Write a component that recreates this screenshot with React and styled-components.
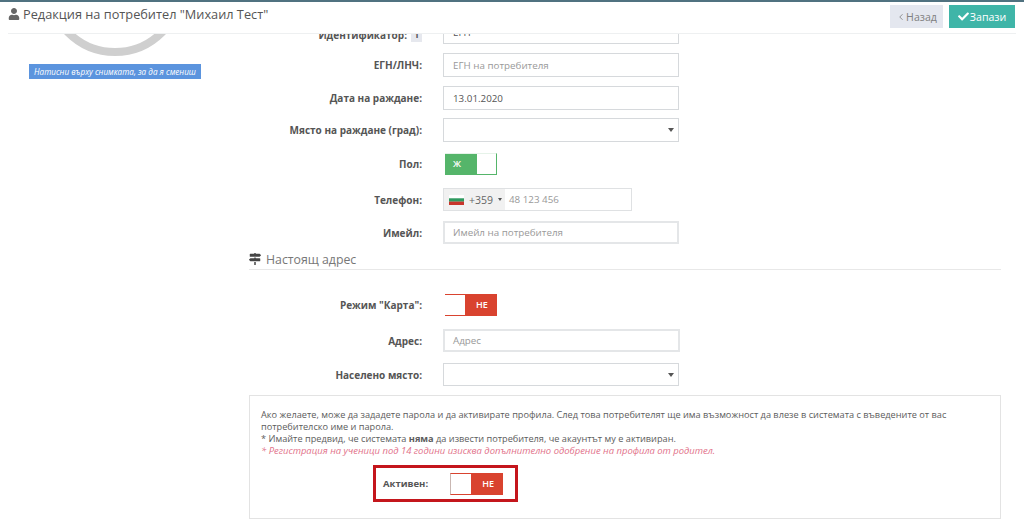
import React from "react";
import styled, { createGlobalStyle } from "styled-components";
import { FaUser, FaCheck, FaMapSigns } from "react-icons/fa";
import { ChevronLeft } from "lucide-react";

const GlobalStyle = createGlobalStyle`
  html, body { margin: 0; padding: 0; background: #fff; }
  body { font-family: "Open Sans", "Liberation Sans", sans-serif; color: #555; overflow: hidden; }
  * { box-sizing: border-box; }
`;

const Page = styled.div`
  width: 1024px;
  height: 519px;
  display: flex;
  flex-direction: column;
  overflow: hidden;
`;

const Header = styled.header`
  flex: none;
  height: 34px;
  border-top: 2px solid #507280;
  padding: 0 8px;
`;

const HeaderInner = styled.div`
  height: 32px;
  padding: 3px 1px 0 0;
  border-bottom: 1px solid #eef0f1;
  display: flex;
  align-items: flex-start;
  justify-content: space-between;
`;

const Title = styled.h1`
  margin: 0;
  font-size: 12.75px;
  font-weight: 400;
  color: #555;
  display: flex;
  align-items: center;
  gap: 3px;
  svg { font-size: 12px; color: #666; }
`;

const Actions = styled.div`
  display: flex;
  gap: 6px;
`;

const HeaderButton = styled.button`
  height: 23px;
  width: ${(p) => (p.$primary ? 66 : 53)}px;
  border: 0;
  padding: 0;
  background: ${(p) => (p.$primary ? "#3fb5a8" : "#e4e7ef")};
  color: ${(p) => (p.$primary ? "#fff" : "#808080")};
  font: 400 10.6px "Open Sans", sans-serif;
  display: flex;
  align-items: center;
  justify-content: center;
  gap: ${(p) => (p.$primary ? 1 : 0)}px;
  svg { font-size: 11px; }
`;

const Scroller = styled.div`
  flex: 1;
  overflow: hidden;
  display: grid;
  grid-template-columns: 249px 752px;
  align-items: start;
`;

const Side = styled.aside`
  display: flex;
  flex-direction: column;
  align-items: center;
  padding-right: 19px;
  margin-top: -118px;
`;

const Avatar = styled.div`
  width: 140px;
  height: 140px;
  border: 8px solid #cfcfcf;
  border-radius: 50%;
`;

const ChangeHint = styled.div`
  margin-top: 8px;
  width: 172px;
  height: 15px;
  background: #5b94de;
  color: #fff;
  font-size: 8.15px;
  font-style: italic;
  line-height: 15px;
  text-align: center;
  white-space: nowrap;
`;

const Form = styled.main`
  margin-top: -14px;
  display: flex;
  flex-direction: column;
`;

const Row = styled.div`
  display: grid;
  grid-template-columns: 173px 1fr;
  column-gap: 21px;
  align-items: center;
  height: ${(p) => p.$height || 24}px;
  margin-top: ${(p) => p.$top ?? 9}px;
`;

const Label = styled.label`
  font-size: 10px;
  font-weight: 700;
  color: #555;
  text-align: right;
  white-space: nowrap;
  display: flex;
  justify-content: flex-end;
  align-items: center;
  gap: 4px;
  padding-top: ${(p) => p.$drop || 0}px;
`;

const Badge = styled.span`
  background: #e6e8ee;
  color: #555;
  font-size: 9px;
  font-weight: 700;
  line-height: 14px;
  width: 11px;
  height: 14px;
  text-align: center;
`;

const Input = styled.div`
  width: ${(p) => p.$width || 236}px;
  height: 100%;
  border: ${(p) => (p.$thick ? "2px solid #e4e6e8" : "1px solid #d6d9dc")};
  background: #fff;
  padding-left: ${(p) => (p.$thick ? 8 : 9)}px;
  font-size: 9.8px;
  display: flex;
  align-items: center;
  justify-content: space-between;
  color: ${(p) => (p.$placeholder ? "#999" : "#555")};
`;

const Caret = styled.span`
  width: 0;
  height: 0;
  border-left: 3px solid transparent;
  border-right: 3px solid transparent;
  border-top: 4px solid #555;
  margin-right: 4px;
`;

const Toggle = styled.div`
  margin-left: ${(p) => p.$left ?? 2}px;
  width: ${(p) => p.$width || 52}px;
  height: 22px;
  display: flex;
  flex-direction: ${(p) => (p.$on ? "row" : "row-reverse")};
  border-bottom: 1px solid ${(p) => p.$color};
  border-top: 1px solid ${(p) => (p.$on ? "#e6f3e9" : p.$color)};
  border-right: ${(p) => (p.$on ? `1px solid ${p.$color}` : "0")};
  border-left: ${(p) => (p.$edge ? "1px solid #c9b7b2" : "0")};
`;

const ToggleFace = styled.span`
  width: 32px;
  background: ${(p) => p.$color};
  color: #fff;
  font-size: 9px;
  font-weight: 600;
  line-height: 20px;
  text-align: center;
  padding-right: ${(p) => (p.$on ? 8 : 0)}px;
  padding-left: ${(p) => (p.$on ? 0 : 2)}px;
`;

const Phone = styled.div`
  width: 189px;
  height: 100%;
  border: 1px solid #dfe1e3;
  display: flex;
  align-items: center;
  font-size: 9.8px;
  color: #999;
`;

const CountryPicker = styled.div`
  width: 61px;
  height: 100%;
  background: #f1f1f1;
  color: #666;
  display: flex;
  align-items: center;
  gap: 5px;
  padding-left: 5px;
  margin-right: 4px;
  font-size: 10.5px;
  span {
    width: 0;
    height: 0;
    border-left: 2.5px solid transparent;
    border-right: 2.5px solid transparent;
    border-top: 3px solid #555;
  }
`;

const SectionTitle = styled.h2`
  margin: 6px 0 0;
  height: 20px;
  border-bottom: 1px solid #e8e8e8;
  font-size: 12.3px;
  font-weight: 400;
  color: #777;
  display: flex;
  align-items: flex-start;
  gap: 5px;
  padding-top: 1px;
  svg { font-size: 12px; color: #444; margin-top: 2px; }
`;

const Notice = styled.section`
  margin-top: 9px;
  height: 124px;
  border: 1px solid #e3e3e3;
  padding: 13px 11px 0;
  font-size: 9.2px;
  line-height: 12px;
  color: #5c5c5c;
`;

const Warning = styled.div`
  color: #e2728a;
  font-size: 9.45px;
  font-style: italic;
`;

const ActiveRow = styled.div`
  margin: 8px 0 0 112px;
  width: 145px;
  height: 37px;
  border: 3px solid #c4161c;
  display: flex;
  align-items: center;
  gap: 22px;
  padding-left: 7px;
`;

const ActiveLabel = styled.span`
  font-size: 9.5px;
  font-weight: 700;
  color: #555;
`;

const Flag = () => (
  <svg width="15" height="10" viewBox="0 0 15 10">
    <rect width="15" height="3.4" fill="#fff" />
    <rect y="3.3" width="15" height="3.4" fill="#2e9a5f" />
    <rect y="6.6" width="15" height="3.4" fill="#c8352b" />
  </svg>
);

const NO_COLOR = "#d9432f";

const App = () => (
  <Page>
    <GlobalStyle />
    <Header>
      <HeaderInner>
        <Title>
          <FaUser />
          Редакция на потребител "Михаил Тест"
        </Title>
        <Actions>
          <HeaderButton>
            <ChevronLeft size={10} strokeWidth={2} />
            Назад
          </HeaderButton>
          <HeaderButton $primary>
            <FaCheck />
            Запази
          </HeaderButton>
        </Actions>
      </HeaderInner>
    </Header>
    <Scroller>
      <Side>
        <Avatar />
        <ChangeHint>Натисни върху снимката, за да я смениш</ChangeHint>
      </Side>
      <Form>
        <Row $top={0}>
          <Label $drop={5}>
            Идентификатор: <Badge>1</Badge>
          </Label>
          <Input>
            ЕГН
            <Caret />
          </Input>
        </Row>
        <Row>
          <Label>ЕГН/ЛНЧ:</Label>
          <Input $placeholder>ЕГН на потребителя</Input>
        </Row>
        <Row>
          <Label>Дата на раждане:</Label>
          <Input>13.01.2020</Input>
        </Row>
        <Row $top={8}>
          <Label>Място на раждане (град):</Label>
          <Input>
            <span />
            <Caret />
          </Input>
        </Row>
        <Row $top={11} $height={22}>
          <Label>Пол:</Label>
          <Toggle $on $color="#55b56a">
            <ToggleFace $on $color="#55b56a">Ж</ToggleFace>
          </Toggle>
        </Row>
        <Row $top={13} $height={23}>
          <Label>Телефон:</Label>
          <Phone>
            <CountryPicker>
              <Flag />
              +359
              <span />
            </CountryPicker>
            48 123 456
          </Phone>
        </Row>
        <Row $top={10} $height={23}>
          <Label>Имейл:</Label>
          <Input $placeholder $thick>Имейл на потребителя</Input>
        </Row>
        <SectionTitle>
          <FaMapSigns />
          Настоящ адрес
        </SectionTitle>
        <Row $top={24} $height={22}>
          <Label>Режим "Карта":</Label>
          <Toggle $color={NO_COLOR}>
            <ToggleFace $color={NO_COLOR}>НЕ</ToggleFace>
          </Toggle>
        </Row>
        <Row $top={13} $height={23}>
          <Label>Адрес:</Label>
          <Input $placeholder $thick $width={237}>
            Адрес
          </Input>
        </Row>
        <Row $top={11} $height={23}>
          <Label>Населено място:</Label>
          <Input>
            <span />
            <Caret />
          </Input>
        </Row>
        <Notice>
          Ако желаете, може да зададете парола и да активирате профила. След това потребителят ще има възможност да влезе в системата с въведените от вас потребителско име и парола.
          <br />* Имайте предвид, че системата <b>няма</b> да извести потребителя, че акаунтът му е активиран.
          <Warning>* Регистрация на ученици под 14 години изисква допълнително одобрение на профила от родител.</Warning>
          <ActiveRow>
            <ActiveLabel>Активен:</ActiveLabel>
            <Toggle $left={0} $width={53} $edge $color={NO_COLOR}>
              <ToggleFace $color={NO_COLOR}>НЕ</ToggleFace>
            </Toggle>
          </ActiveRow>
        </Notice>
      </Form>
    </Scroller>
  </Page>
);

export default App;
